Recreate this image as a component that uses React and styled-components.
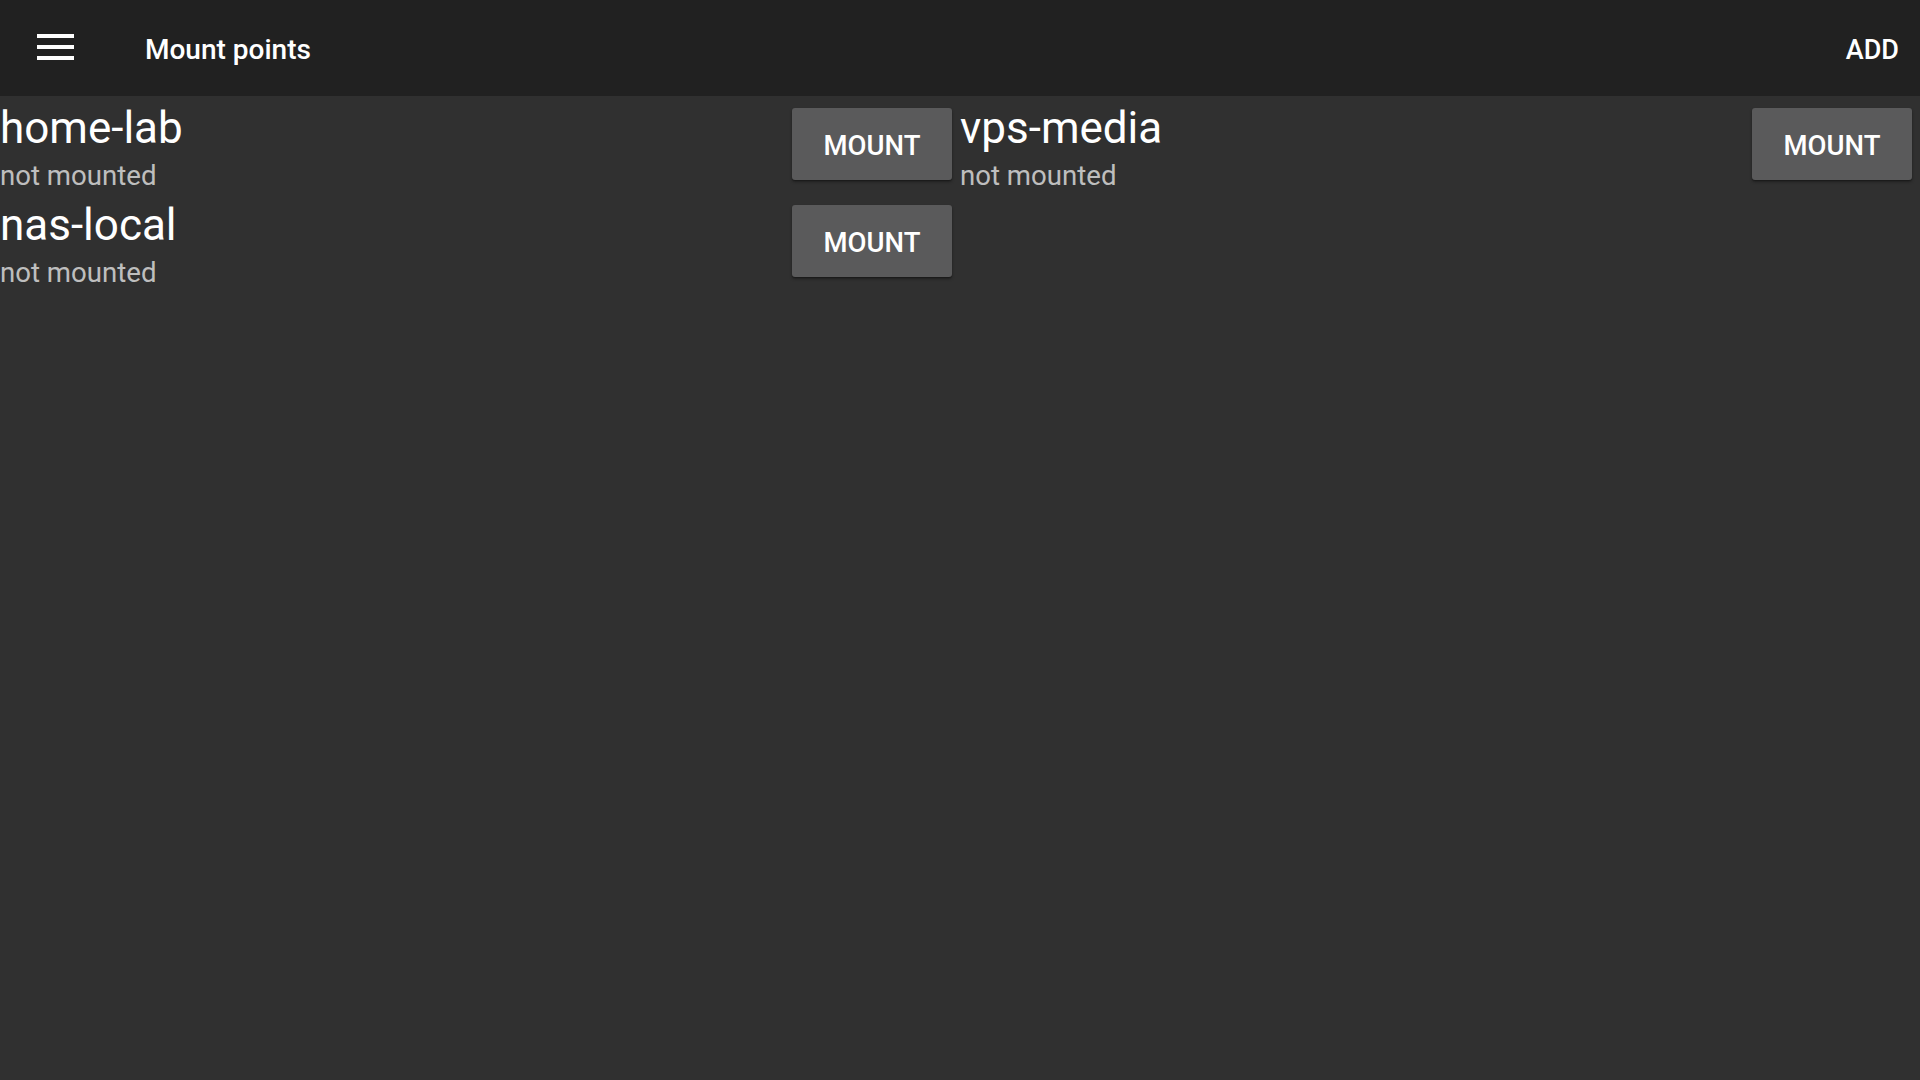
import React from "react";
import styled, { createGlobalStyle } from "styled-components";

const GlobalStyle = createGlobalStyle`
  html, body {
    margin: 0;
    padding: 0;
    background: #303030;
    font-family: Roboto, "Noto Sans", "Liberation Sans", sans-serif;
    color: #ffffff;
  }
  #root {
    min-height: 100vh;
  }
`;

const Page = styled.div`
  min-height: 100vh;
  background: #303030;
  display: flex;
  flex-direction: column;
`;

const TopBar = styled.header`
  height: 96px;
  background: #212121;
  display: flex;
  align-items: center;
  padding: 0 21px 0 37px;
  box-sizing: border-box;
`;

const MenuButton = styled.button`
  width: 37px;
  height: 27px;
  padding: 0;
  margin: -2px 0 0 0;
  border: none;
  background: transparent;
  display: flex;
  cursor: pointer;
`;

const Title = styled.h1`
  margin: 0 0 0 71px;
  font-size: 28px;
  font-weight: 500;
  letter-spacing: 0;
  flex: 1;
  line-height: 1;
  padding-top: 3px;
`;

const TextButton = styled.button`
  background: transparent;
  border: none;
  color: #ffffff;
  font-family: inherit;
  font-size: 27px;
  font-weight: 500;
  padding: 4px 0 0 0;
  line-height: 1;
  cursor: pointer;
`;

const List = styled.main`
  display: grid;
  grid-template-columns: 1fr 1fr;
  align-content: start;
`;

const Row = styled.div`
  display: flex;
  align-items: flex-start;
  height: 97px;
`;

const Info = styled.div`
  flex: 1;
  min-width: 0;
  padding-top: 1px;
`;

const Name = styled.div`
  font-size: 44px;
  line-height: 62px;
  font-weight: 400;
  color: #ffffff;
`;

const Status = styled.div`
  font-size: 27.6px;
  line-height: 34px;
  color: rgba(255, 255, 255, 0.7);
`;

const RaisedButton = styled.button`
  margin: 12px 8px 0 0;
  width: 160px;
  height: 72px;
  padding: 3px 0 0 0;
  border: none;
  border-radius: 3px;
  background: #5a5a5b;
  color: #ffffff;
  font-family: inherit;
  font-size: 27.5px;
  font-weight: 500;
  box-shadow: 0 2px 3px rgba(0, 0, 0, 0.35), 0 1px 1px rgba(0, 0, 0, 0.2);
  cursor: pointer;
`;

const MenuIcon = () => (
  <svg width="37" height="27" viewBox="0 0 37 27" fill="#ffffff">
    <rect x="0" y="0" width="37" height="4" />
    <rect x="0" y="11" width="37" height="4" />
    <rect x="0" y="22" width="37" height="4" />
  </svg>
);

const mounts = [
  { name: "home-lab", status: "not mounted" },
  { name: "vps-media", status: "not mounted" },
  { name: "nas-local", status: "not mounted" },
];

export default function App() {
  return (
    <>
      <GlobalStyle />
      <Page>
        <TopBar>
          <MenuButton aria-label="menu">
            <MenuIcon />
          </MenuButton>
          <Title>Mount points</Title>
          <TextButton>ADD</TextButton>
        </TopBar>
        <List>
          {mounts.map((m) => (
            <Row key={m.name}>
              <Info>
                <Name>{m.name}</Name>
                <Status>{m.status}</Status>
              </Info>
              <RaisedButton>MOUNT</RaisedButton>
            </Row>
          ))}
        </List>
      </Page>
    </>
  );
}
